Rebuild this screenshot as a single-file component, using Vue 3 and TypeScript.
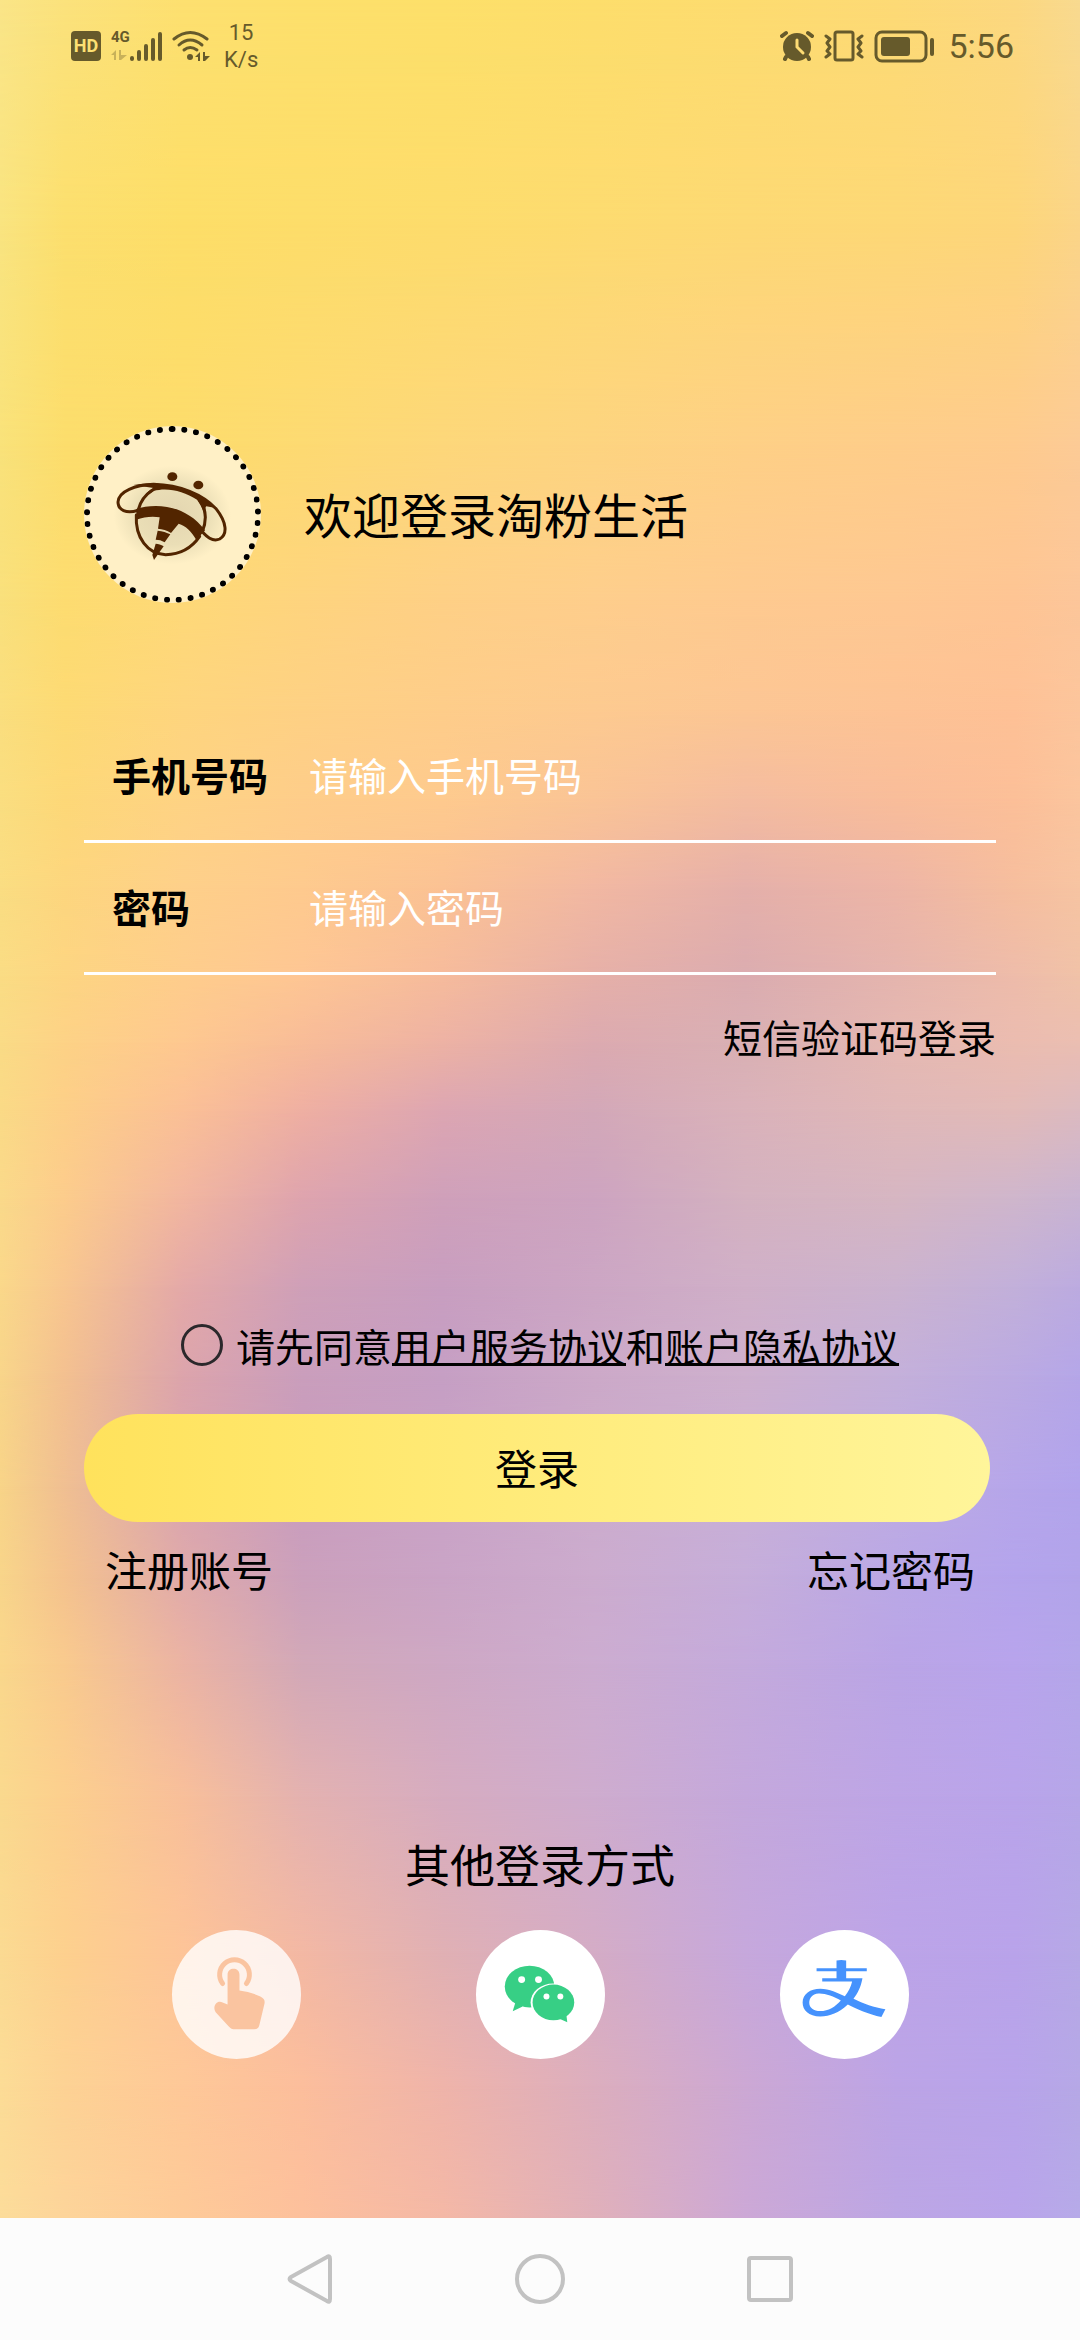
<script setup lang="ts">
import { ref } from 'vue'

const phone = ref('')
const password = ref('')
const agreed = ref(false)

interface MeshRow {
  at: number
  colors: string
}

/* Horizontal stops of the colour mesh, in percent of the width. */
const columns: number[] = [0, 6, 17, 28, 41, 55, 69, 83, 94, 100]

/* Each row holds one colour per column; "at" is its height in percent. */
const mesh: MeshRow[] = [
  { at: 0, colors: 'fae588 fbe27c fde070 fde06c fde06a fdde6c fddc70 fdda76 fcd880 f8da90' },
  { at: 10, colors: 'f9e480 fcdf6e fdde68 fddd6a fddc6c fddb70 fdd974 fdd876 fdd67a fbd588' },
  { at: 20, colors: 'f9e27a fcdd6c fddc6c fdda72 fdd77a fdd480 fed086 fecd8a fecb8e fccb96' },
  { at: 27, colors: 'f9e07c fddc70 fed978 fed47e fed086 fece8c feca90 fec892 fec594 fcc69a' },
  { at: 32, colors: 'fade7e fdda74 fed57e fed184 fecd8a fdca90 fcc694 fdc395 fec196 fcc59c' },
  { at: 36, colors: 'fade80 fdd878 fed384 fecd8a feca8e fac496 f4bca0 f9bd9a fcbf98 fbc59e' },
  { at: 40, colors: 'fadd82 fdd67e fed08a feca8e fbc294 f2b8a2 e5b0aa edb5a6 f6be9e f7c4a2' },
  { at: 44, colors: 'fadc84 fdd582 fecd8c fec694 f6bb9c e6b0a8 dbacb0 e5b5ae eebcaa f0c2a8' },
  { at: 47, colors: 'fadb86 fdd286 fec890 f8bc98 edb2a4 dcaab0 d9b0b4 e5b8b2 ebbcb0 ebbeb2' },
  { at: 50, colors: 'fada86 fdcf88 fbc096 efafa2 dda6b2 d3a8b8 dab2ba e0b8b8 e2bab8 dcbac0' },
  { at: 54, colors: 'fad98a fccc8c f2b6a0 dea4ae cfa0ba cda4c0 d4b2c0 d6b6c2 cfb6cc c9b4d2' },
  { at: 58, colors: 'fad88a f8c690 e4a9a8 cfa0b8 c89ec0 cca6c4 d0b0c8 cbb3cf c2b0da bcabe0' },
  { at: 62, colors: 'f8d58a f3c090 dca4ac ca9ebc c69fc4 cca9c8 ceb0ce c4b0da bbaae2 b5a6e8' },
  { at: 67, colors: 'f8d488 f0bf92 d8a4b0 c89cbe c8a2c6 cbabcc c8afd6 beabe2 b6a6ea b2a4ec' },
  { at: 71, colors: 'f8d58a f4c28e e0aaaa cba0bc caa4c6 ccacce c6aeda baa8e6 b4a4ec b2a4ea' },
  { at: 75, colors: 'fad78c f9ca8e ebb3a4 d2a8b8 cea8c4 ccacd0 c4aadc baa5e6 b8a4ec b4a6ea' },
  { at: 81, colors: 'fad98e fccf8e f8bf9a e4b2b0 d6acc0 ceacce c4a8dc bda5e6 b9a4ea b6a6e8' },
  { at: 88, colors: 'fbda92 fdd08e fdc498 f3b8a4 e0b0b4 d4acc6 c6a8dc bca4e8 b9a3ea b6a8e6' },
  { at: 94, colors: 'fcdc96 fdd294 fec898 fcbe9c efb4aa dcaebe cca8d4 bca4e6 b8a4ea b6a8e6' },
  { at: 100, colors: 'fcdc9a fdd49a feca98 fdc09c f4b8a6 e0b0ba cca8d6 bca6e4 b9a4ea b6aae8' },
]

/* Every layer fades in between the row above and its own row. */
const layers = mesh.map((row, i) => {
  const stops = row.colors.split(' ').map((c, k) => `#${c} ${columns[k]}%`)
  const style: Record<string, string> = {
    backgroundImage: `linear-gradient(to right, ${stops.join(', ')})`,
  }
  if (i > 0) {
    style.maskImage = `linear-gradient(to bottom, transparent ${mesh[i - 1].at}%, #000 ${row.at}%)`
  }
  return style
})
</script>

<template>
  <div class="screen">
    <div class="page">
      <div class="backdrop" aria-hidden="true">
        <div v-for="(layer, i) in layers" :key="i" class="layer" :style="layer"></div>
      </div>

      <header class="status">
        <div class="status-left">
          <span class="hd">HD</span>
          <div class="signal">
            <div class="network">
              <span class="network-name">4G</span>
              <svg width="16" height="12" viewBox="0 0 16 12">
                <path d="M0 6 L5 1 V11 H3 V6 Z M8 1 H10 V6 H16 L10 11 H8 Z" fill="#665a2b" opacity="0.35" />
              </svg>
            </div>
            <svg width="33" height="34" viewBox="0 0 33 34">
              <g stroke="#665a2b" stroke-width="4" stroke-linecap="round">
                <path d="M3 29 V30 M10 23 V30 M17 17 V30 M24 11 V30 M31 5 V30" />
              </g>
            </svg>
          </div>
          <svg width="38" height="32" viewBox="0 0 38 32">
            <g fill="none" stroke="#665a2b" stroke-width="3" stroke-linecap="round">
              <path d="M2 9 Q18 -4 35 9" />
              <path d="M7 15 Q18 5 30 15" />
              <path d="M12 20 Q18 15 25 20" />
            </g>
            <circle cx="18" cy="27" r="3" fill="#665a2b" />
            <path d="M23 27 L28 22 V31 H26 V27 Z M31 22 H33 V26 H38 L33 31 H31 Z" fill="#665a2b" />
          </svg>
          <div class="speed">
            <span>15</span>
            <span>K/s</span>
          </div>
        </div>
        <div class="status-right">
          <svg width="34" height="32" viewBox="0 0 34 32">
            <circle cx="17" cy="17" r="14" fill="#665a2b" />
            <g fill="none" stroke="#665a2b" stroke-width="4" stroke-linecap="round">
              <path d="M2 6 L6 3 M28 3 L32 6 M6 27 L5 29 M28 27 L29 29" />
            </g>
            <path d="M17 10 V17 L23 23" fill="none" stroke="#fddc74" stroke-width="3" stroke-linecap="round" />
          </svg>
          <svg width="40" height="34" viewBox="0 0 40 34">
            <rect x="11" y="3" width="18" height="28" rx="2" fill="none" stroke="#665a2b" stroke-width="3" />
            <g fill="none" stroke="#665a2b" stroke-width="3" stroke-linejoin="round" stroke-linecap="round">
              <path d="M2 7 L6 10 L3 14 L6 18 L3 22 L6 25 L2 28" />
              <path d="M38 7 L34 10 L37 14 L34 18 L37 22 L34 25 L38 28" />
            </g>
          </svg>
          <svg width="60" height="34" viewBox="0 0 60 34">
            <rect x="2" y="3" width="50" height="29" rx="6" fill="none" stroke="#665a2b" stroke-width="3" />
            <rect x="7" y="8" width="29" height="19" rx="3" fill="#665a2b" />
            <path d="M58 11 V25" stroke="#665a2b" stroke-width="4" stroke-linecap="round" />
          </svg>
          <span class="clock">5:56</span>
        </div>
      </header>

      <main class="content">
        <div class="brand">
          <div class="logo">
            <svg width="120" height="120" viewBox="128 132 360 360">
              <defs>
                <radialGradient id="logoGlow">
                  <stop offset="0" stop-color="#e3d5b0" />
                  <stop offset="0.6" stop-color="#eadeb6" />
                  <stop offset="1" stop-color="#fff0c6" />
                </radialGradient>
              </defs>
              <ellipse cx="306" cy="312" rx="176" ry="148" fill="url(#logoGlow)" />
              <g fill="#522500">
                <ellipse cx="306" cy="197" rx="15" ry="13" />
                <ellipse cx="384" cy="222" rx="15" ry="13" />
                <path d="M198 294 C250 276 345 278 404 358 L378 387 C364 362 346 344 325 338 L302 366 C290 358 276 354 263 353 L268 319 C246 315 220 318 198 326 Z" />
                <path d="M262 359 C276 360 290 365 300 370 L283 394 C274 388 266 386 256 386 Z" />
                <path d="M256 398 C264 398 272 401 280 406 L251 447 L246 432 Z" />
                <path d="M190 222 C290 206 380 238 440 292 L408 286 C402 290 408 310 404 322 C400 300 394 286 380 266 C340 240 290 228 250 240 C236 248 228 254 222 260 C228 244 238 236 250 231 Z" />
              </g>
              <g fill="none" stroke="#522500" stroke-width="9" stroke-linecap="round">
                <path d="M202 298 C168 310 143 296 143 273 C145 240 195 222 250 220 C330 222 396 250 437 293 C470 335 472 370 448 384 C426 394 408 376 394 360" />
                <path d="M248 236 C226 250 210 270 204 296" />
                <path d="M198 312 C194 380 232 430 286 431 C330 430 366 408 388 376" />
                <path d="M388 268 C406 292 410 326 396 362" />
              </g>
            </svg>
          </div>
          <h1 class="title">欢迎登录淘粉生活</h1>
        </div>

        <form class="form" @submit.prevent>
          <div class="field">
            <label for="phone">手机号码</label>
            <input id="phone" v-model="phone" type="tel" placeholder="请输入手机号码" />
          </div>
          <div class="field">
            <label for="password">密码</label>
            <input id="password" v-model="password" type="password" placeholder="请输入密码" />
          </div>
          <a class="sms" href="#">短信验证码登录</a>

          <div class="agreement">
            <input id="agree" v-model="agreed" type="checkbox" />
            <div class="terms">
              <label for="agree">请先同意</label><a href="#">用户服务协议</a>和<a href="#">账户隐私协议</a>
            </div>
          </div>

          <button class="submit" type="submit">登录</button>
        </form>

        <nav class="account">
          <a href="#">注册账号</a>
          <a href="#">忘记密码</a>
        </nav>

        <section class="others">
          <h2>其他登录方式</h2>
          <div class="methods">
            <button class="method faded" type="button" aria-label="一键登录">
              <svg width="129" height="129" viewBox="-65 -65 130 130">
                <path d="M-14 -11 A15 15 0 1 1 10 -11" fill="none" stroke="#fac4a0" stroke-width="5" stroke-linecap="round" />
                <path d="M-9 -20 C-9 -28 3 -28 3 -20 V-4 C10 -3 18 -1 24 2 C28 4 29 6 28 10 L23 31 C22 34 21 35 18 35 H-3 C-5 35 -6 34 -8 32 L-21 18 C-25 11 -19 5 -14 8 L-9 10 Z" fill="#fac4a0" />
              </svg>
            </button>
            <button class="method" type="button" aria-label="微信登录">
              <svg width="129" height="129" viewBox="-65 -65 130 130">
                <g fill="#37cf85">
                  <ellipse cx="-11" cy="-8" rx="25" ry="21" />
                  <path d="M-25 7 L-28 17 L-18 12 Z" />
                </g>
                <ellipse cx="13" cy="8" rx="23" ry="19" fill="#fff" />
                <g fill="#37cf85">
                  <ellipse cx="13" cy="8" rx="21" ry="18" />
                  <path d="M26 20 L27 28 L18 24 Z" />
                </g>
                <g fill="#fff">
                  <circle cx="-19" cy="-15" r="3.5" />
                  <circle cx="-2" cy="-15" r="3.5" />
                  <circle cx="6" cy="2" r="3" />
                  <circle cx="20" cy="2" r="3" />
                </g>
              </svg>
            </button>
            <button class="method" type="button" aria-label="支付宝登录">
              <svg width="129" height="129" viewBox="119 59 388 388">
                <path fill="#4592fd" fill-rule="evenodd" d="M289 151 Q303 148 318 151 V174 H380 V183 H318 V204 H367 C362 232 352 250 340 266 C370 281 402 293 436 297 L424 321 C385 312 350 297 323 283 C295 308 270 319 240 319 C205 319 187 300 187 277 C187 252 210 236 240 236 C268 236 292 249 314 258 C325 245 332 230 336 214 H246 V204 H289 V183 H229 V174 H289 Z M302 271 C280 258 255 249 235 250 C215 251 207 265 207 278 C207 293 220 303 240 303 C265 303 285 290 302 271 Z" />
              </svg>
            </button>
          </div>
        </section>
      </main>
    </div>

    <nav class="system">
      <button type="button" aria-label="返回">
        <svg width="50" height="52" viewBox="0 0 50 52">
          <path d="M42 4 Q45 2 45 6 V46 Q45 50 42 48 L6 28 Q3 26 6 24 Z" fill="none" stroke="#c2c2c2" stroke-width="4" stroke-linejoin="round" />
        </svg>
      </button>
      <button type="button" aria-label="主页">
        <svg width="50" height="52" viewBox="0 0 50 52">
          <circle cx="25" cy="26" r="23" fill="none" stroke="#c2c2c2" stroke-width="4" />
        </svg>
      </button>
      <button type="button" aria-label="最近任务">
        <svg width="50" height="52" viewBox="0 0 50 52">
          <rect x="4" y="5" width="42" height="42" rx="2" fill="none" stroke="#c2c2c2" stroke-width="4" />
        </svg>
      </button>
    </nav>
  </div>
</template>

<style>
body {
  background: #fcfcfc;
}
</style>

<style scoped>
.screen {
  display: flex;
  flex-direction: column;
  min-height: 100vh;
  color: #000;
  font-family: "Noto Sans CJK SC", "Noto Sans", sans-serif;
}

.screen svg {
  display: block;
  flex: none;
}

button,
input {
  margin: 0;
  padding: 0;
  border: 0;
  background: none;
  font: inherit;
  color: inherit;
}

a {
  color: inherit;
  text-decoration: none;
}

h1,
h2 {
  margin: 0;
  font-weight: 400;
}

.page {
  position: relative;
  flex: 1;
  display: flex;
  flex-direction: column;
}

.backdrop {
  position: absolute;
  inset: 0;
  z-index: -1;
}

.layer {
  position: absolute;
  inset: 0;
}

.status {
  display: flex;
  justify-content: space-between;
  align-items: center;
  height: 92px;
  padding: 0 66px 0 71px;
  color: #665a2b;
  font-family: Roboto, sans-serif;
}

.status-left,
.status-right {
  display: flex;
  align-items: center;
  gap: 10px;
}

.hd {
  width: 30px;
  border-radius: 4px;
  background: #665a2b;
  color: #fde073;
  font-size: 18px;
  font-weight: 700;
  line-height: 30px;
  text-align: center;
}

.signal {
  display: flex;
}

.network {
  display: flex;
  flex-direction: column;
  justify-content: space-between;
  height: 32px;
}

.network-name {
  width: 18px;
  font-size: 15px;
  font-weight: 700;
  line-height: 16px;
}

.speed {
  display: flex;
  flex-direction: column;
  padding-left: 4px;
  font-size: 22px;
  line-height: 27px;
  text-align: center;
}

.clock {
  padding-left: 4px;
  font-size: 34px;
}

.content {
  padding: 334px 84px 100px;
}

.brand {
  display: flex;
  align-items: center;
  gap: 43px;
}

.logo {
  display: flex;
  align-items: center;
  justify-content: center;
  box-sizing: border-box;
  width: 177px;
  height: 177px;
  border: 6px dotted #000;
  border-radius: 50%;
  background: #fff0c6;
  background-clip: border-box;
}

.title {
  padding-bottom: 4px;
  font-size: 48px;
  line-height: 60px;
}

.form {
  display: flex;
  flex-direction: column;
  margin-top: 108px;
}

.field {
  display: flex;
  align-items: center;
  box-sizing: border-box;
  height: 132px;
  padding: 0 0 4px 28px;
  border-bottom: 3px solid #fff;
  font-size: 39px;
}

.field label {
  width: 197px;
  font-weight: 700;
}

.field input {
  flex: 1;
  min-width: 0;
  height: 60px;
  outline: none;
}

.field input::placeholder {
  color: #fff;
  opacity: 1;
}

.sms {
  align-self: flex-end;
  margin-top: 31px;
  font-size: 39px;
  line-height: 60px;
}

.agreement {
  display: flex;
  align-items: center;
  justify-content: center;
  gap: 13px;
  margin-top: 249px;
  font-size: 39px;
  line-height: 60px;
}

.agreement input {
  appearance: none;
  flex: none;
  width: 42px;
  height: 42px;
  border: 3px solid #2b282b;
  border-radius: 50%;
}

.agreement input:checked {
  background: #2b282b;
}

.terms a {
  text-decoration: underline;
  text-decoration-thickness: 3px;
  text-decoration-skip-ink: none;
  text-underline-offset: 1px;
}

.submit {
  height: 108px;
  margin: 39px 6px 0 0;
  padding-bottom: 4px;
  border-radius: 54px;
  background: linear-gradient(to right, #ffe25c, #fff59a);
  font-size: 42px;
}

.account {
  display: flex;
  justify-content: space-between;
  margin-top: 17px;
  padding: 0 21px;
  font-size: 42px;
  line-height: 60px;
}

.others {
  margin-top: 235px;
}

.others h2 {
  font-size: 45px;
  line-height: 60px;
  text-align: center;
}

.methods {
  display: grid;
  grid-template-columns: repeat(3, 1fr);
  justify-items: center;
  margin-top: 36px;
}

.method {
  width: 129px;
  height: 129px;
  border-radius: 50%;
  background: #fff;
}

.faded {
  background: rgba(255, 255, 255, 0.8);
}

.system {
  display: flex;
  align-items: center;
  justify-content: center;
  gap: 180px;
  height: 122px;
  background: #fcfcfc;
}
</style>
